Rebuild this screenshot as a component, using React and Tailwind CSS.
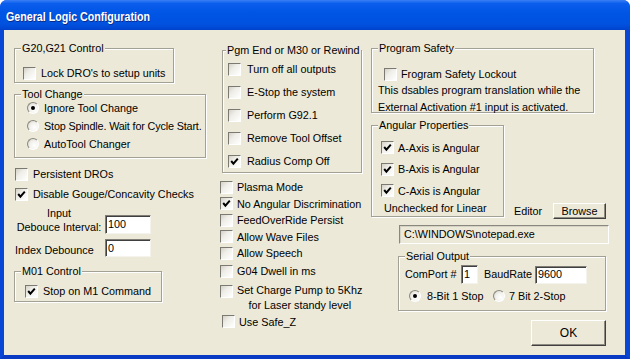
import React from 'react';

// classic XP-era control pieces
const Check = ({ checked }) => (
  <span className="relative inline-block w-[13px] h-[13px] shrink-0 border border-t-[#7b7a72] border-l-[#7b7a72] border-r-white border-b-white bg-[linear-gradient(135deg,#d4d1c6_0%,#efeee8_40%,#ffffff_100%)]">
    {checked && (
      <svg viewBox="0 0 11 11" className="absolute left-0 top-0 w-[11px] h-[11px]">
        <path d="M2.2 5 L4.4 7.6 L8.8 2.6" stroke="#000" strokeWidth="2" fill="none" />
      </svg>
    )}
  </span>
);

const Radio = ({ on }) => (
  <span className="relative inline-flex items-center justify-center w-[12px] h-[12px] shrink-0 rounded-full border border-t-[#8a887e] border-l-[#8a887e] border-r-white border-b-white bg-[radial-gradient(circle_at_65%_65%,#ffffff_0%,#f2f1ec_50%,#cfccc0_100%)]">
    {on && <span className="w-[4px] h-[4px] rounded-full bg-black" />}
  </span>
);

const CheckRow = ({ label, checked, className = '' }) => (
  <div className={`flex items-center whitespace-nowrap ${className}`}>
    <Check checked={checked} />
    <span>{label}</span>
  </div>
);

const RadioRow = ({ label, on, className = '' }) => (
  <div className={`flex items-center whitespace-nowrap ${className}`}>
    <Radio on={on} />
    <span>{label}</span>
  </div>
);

const Group = ({ title, titleClass = 'left-[6px]', className = '', children }) => (
  <div className={`relative border border-[#a3a095] shadow-[inset_1px_1px_0_#ffffff,1px_1px_0_#ffffff] ${className}`}>
    <span className={`absolute top-[-7px] px-[1px] bg-[#ECE9D8] leading-[13px] whitespace-nowrap ${titleClass}`}>
      {title}
    </span>
    {children}
  </div>
);

const TextBox = ({ value, className = '' }) => (
  <div className={`flex items-center pl-[2px] bg-white border border-t-[#7f7d75] border-l-[#7f7d75] border-r-[#f4f3ee] border-b-[#f4f3ee] shadow-[inset_1px_1px_0_#3f3f3f] ${className}`}>
    {value}
  </div>
);

const Button = ({ label, className = '' }) => (
  <div className={`flex items-center justify-center bg-[#ECE9D8] border border-t-white border-l-white border-r-[#404040] border-b-[#404040] shadow-[inset_-1px_-1px_0_#8d8b82] ${className}`}>
    {label}
  </div>
);

export default function App() {
  return (
    <div className="w-[630px] h-[359px] bg-white font-['Liberation_Sans',Arial,sans-serif] text-[10.8px] text-black">
      <div className="w-[630px] h-[359px] flex flex-col rounded-t-[7px] overflow-hidden bg-[#0a48d8]">
        {/* title bar */}
        <div className="h-[30px] shrink-0 flex items-center pl-[6px] pt-[4px] bg-[linear-gradient(to_bottom,#3a7ef5_0%,#0a5ded_12%,#0055e5_45%,#0052df_80%,#0043cc_100%)]">
          <span className="inline-block origin-left scale-x-[0.82] text-[13px] font-bold text-white [text-shadow:1px_1px_0_#0b2a8a]">
            General Logic Configuration
          </span>
        </div>

        {/* dialog body */}
        <div className="flex-1 flex items-start bg-[#ECE9D8] border-l-[4px] border-r-[5px] border-b-[4px] border-l-[#0a46d6] border-r-[#0a46d6] border-b-[#083ac4]">
          {/* left column */}
          <div className="ml-[10px] w-[192px] flex flex-col">
            <Group title="G20,G21 Control" className="mt-[18px] w-[160px] h-[35px] pt-[16px] pl-[8px]">
              <CheckRow label="Lock DRO's to setup units" className="gap-[5px]" />
            </Group>

            <Group title="Tool Change" className="mt-[11px] w-[192px] h-[64px] pt-[4px] pl-[12px]">
              <RadioRow label="Ignore Tool Change" on className="h-[18px] gap-[5px]" />
              <RadioRow label="Stop Spindle. Wait for Cycle Start." className="h-[18px] gap-[5px] tracking-[-0.15px]" />
              <RadioRow label="AutoTool Changer" className="h-[18px] gap-[5px]" />
            </Group>

            <CheckRow label="Persistent DROs" className="mt-[6px] ml-[1px] h-[20px] gap-[5px]" />
            <CheckRow label="Disable Gouge/Concavity Checks" checked className="ml-[1px] h-[20px] gap-[5px]" />

            <div className="mt-[2px] flex items-end">
              <div className="ml-[1px] w-[88px] text-center leading-[14px]">
                Input<br />Debouce Interval:
              </div>
              <TextBox value="100" className="ml-[2px] w-[46px] h-[19px]" />
            </div>

            <div className="mt-[5px] flex items-end">
              <div className="ml-[1px] w-[88px] leading-[14px]">Index Debounce</div>
              <TextBox value="0" className="ml-[2px] w-[46px] h-[18px]" />
            </div>

            <Group title="M01 Control" className="mt-[14px] w-[148px] h-[31px] pt-[11px] pl-[10px]">
              <CheckRow label="Stop on M1 Command" checked className="gap-[5px]" />
            </Group>
          </div>

          {/* middle column */}
          <div className="ml-[13px] w-[143px] flex flex-col">
            <Group title="Pgm End or M30 or Rewind" titleClass="left-[3px]" className="mt-[20px] ml-[3px] w-[140px] h-[123px] pt-[7px] pl-[5px]">
              <CheckRow label="Turn off all outputs" className="h-[23px] gap-[6px]" />
              <CheckRow label="E-Stop the system" className="h-[23px] gap-[6px]" />
              <CheckRow label="Perform G92.1" className="h-[23px] gap-[6px]" />
              <CheckRow label="Remove Tool Offset" className="h-[23px] gap-[6px]" />
              <CheckRow label="Radius Comp Off" checked className="h-[23px] gap-[6px]" />
            </Group>

            <div className="mt-[6px] ml-[1px] flex flex-col">
              <CheckRow label="Plasma Mode" className="h-[16.5px] gap-[4px]" />
              <CheckRow label="No Angular Discrimination" checked className="h-[16.5px] gap-[4px]" />
              <CheckRow label="FeedOverRide Persist" className="h-[16.5px] gap-[4px]" />
              <CheckRow label="Allow Wave Files" className="h-[16.5px] gap-[4px]" />
              <CheckRow label="Allow Speech" className="h-[16.5px] gap-[4px]" />
              <CheckRow label="G04 Dwell in ms" className="mt-[1.5px] h-[16.5px] gap-[4px]" />
              <div className="mt-[3px] flex items-start gap-[4px]">
                <span className="mt-[2.5px]"><Check /></span>
                <div className="leading-[15px] text-center whitespace-nowrap">
                  Set Charge Pump to 5Khz<br />for Laser standy level
                </div>
              </div>
              <CheckRow label="Use Safe_Z" className="mt-[1px] ml-[2px] h-[16.5px] gap-[4px]" />
            </div>
          </div>

          {/* right column */}
          <div className="ml-[9px] w-[237px] flex flex-col">
            <Group title="Program Safety" className="mt-[18px] w-[223px] h-[65px] pt-[17px]">
              <CheckRow label="Frogram Safety Lockout" className="pl-[12px] h-[16px] gap-[4px]" />
              <div className="pl-[6px] leading-[17px] whitespace-nowrap">
                This dsables program translation while the<br />
                External Activation #1 input is activated.
              </div>
            </Group>

            <div className="mt-[12px] flex items-start">
              <Group title="Angular Properties" className="w-[133px] h-[92px] pt-[11px]">
                <CheckRow label="A-Axis is Angular" checked className="pl-[9px] h-[21.5px] gap-[4px]" />
                <CheckRow label="B-Axis is Angular" checked className="pl-[9px] h-[21.5px] gap-[4px]" />
                <CheckRow label="C-Axis is Angular" checked className="pl-[9px] h-[21.5px] gap-[4px]" />
                <div className="pl-[12px] leading-[12px]">Unchecked for Linear</div>
              </Group>
              <div className="ml-[10px] mt-[78px] h-[16px] flex items-center">
                <span className="w-[29px]">Editor</span>
                <Button label="Browse" className="ml-[10px] w-[53px] h-[16px]" />
              </div>
            </div>

            <div className="mt-[6px] ml-[28px] w-[210px] h-[19px] flex items-center pl-[4px] bg-[#ECE9D8] border border-t-[#8a887e] border-l-[#8a887e] border-r-white border-b-white shadow-[inset_1px_1px_0_#d5d2c6]">
              C:\WINDOWS\notepad.exe
            </div>

            <Group title="Serial Output" className="mt-[12px] ml-[27px] w-[208px] h-[55px] pt-[8px]">
              <div className="pl-[6px] h-[19px] flex items-center">
                <span className="w-[56px] whitespace-nowrap">ComPort #</span>
                <TextBox value="1" className="w-[17px] h-[19px]" />
                <span className="ml-[6px] w-[51px]">BaudRate</span>
                <TextBox value="9600" className="w-[52px] h-[18px]" />
              </div>
              <div className="mt-[5px] pl-[10px] h-[14px] flex items-center">
                <RadioRow label="8-Bit 1 Stop" on className="w-[84px] gap-[6px]" />
                <RadioRow label="7 Bit 2-Stop" className="gap-[4px]" />
              </div>
            </Group>

            <Button label="OK" className="mt-[9px] ml-[160px] w-[75px] h-[26px] text-[12px]" />
          </div>
        </div>
      </div>
    </div>
  );
}
